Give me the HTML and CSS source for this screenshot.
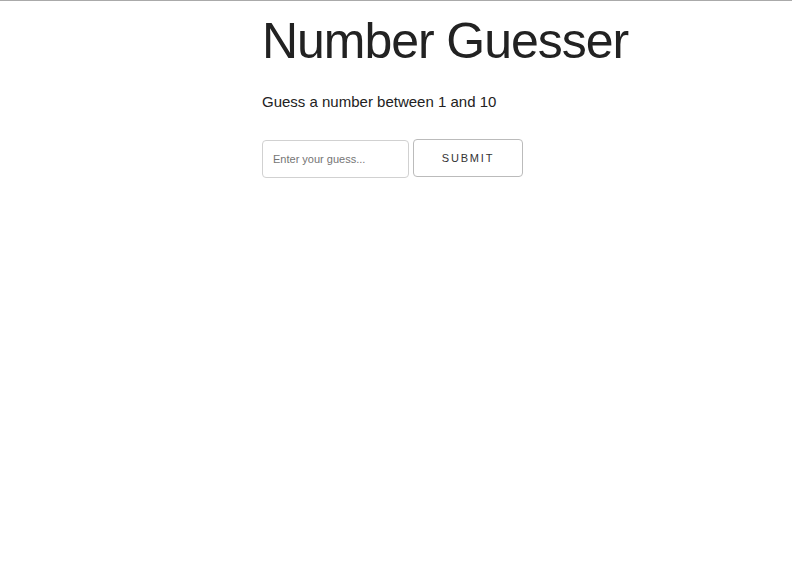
FILE: index.html
```html
<!DOCTYPE html>
<html lang="en">
<head>
<meta charset="utf-8">
<title>Number Guesser</title>
<link rel="stylesheet" href="styles.css">
</head>
<body>
<div class="page">
  <div class="content">
    <h1 class="title">Number Guesser</h1>
    <p class="lead">Guess a number between 1 and 10</p>
    <form class="guess-form">
      <input class="guess-input" type="text" placeholder="Enter your guess...">
      <button class="guess-button" type="button">Submit</button>
    </form>
  </div>
</div>
</body>
</html>
```
FILE: styles.css
```css
html, body {
  margin: 0;
  padding: 0;
  background: #ffffff;
}
body {
  font-family: "Liberation Sans", Arial, Helvetica, sans-serif;
  color: #222222;
  font-size: 15px;
  line-height: 1.6;
}
.page {
  border-top: 1px solid #aaaaaa;
  height: 583px;
  box-sizing: border-box;
}
.content {
  padding-left: 262px;
  padding-top: 10px;
}
.title {
  margin: 0 0 19px 0;
  font-size: 50px;
  line-height: 60px;
  font-weight: 400;
  letter-spacing: -1.05px;
  color: #222222;
}
.lead {
  margin: 0 0 25px 0;
  font-size: 15px;
  line-height: 24px;
}
.guess-form {
  display: flex;
  align-items: flex-start;
  gap: 4px;
}
.guess-input {
  margin-top: 1px;
  width: 147px;
  height: 38px;
  box-sizing: border-box;
  padding: 6px 10px;
  border: 1px solid #d1d1d1;
  border-radius: 4px;
  font-family: "Liberation Sans", Arial, sans-serif;
  font-size: 11px;
  color: #333;
  background: #fff;
  outline: none;
}
.guess-input::placeholder {
  color: #757575;
}
.guess-button {
  width: 110px;
  height: 38px;
  box-sizing: border-box;
  padding: 0;
  border: 1px solid #bbbbbb;
  border-radius: 4px;
  background: transparent;
  color: #333333;
  font-family: "Liberation Sans", Arial, sans-serif;
  font-size: 11px;
  font-weight: 400;
  letter-spacing: 1.8px;
  text-transform: uppercase;
  line-height: 36px;
  text-align: center;
  cursor: pointer;
}
```
